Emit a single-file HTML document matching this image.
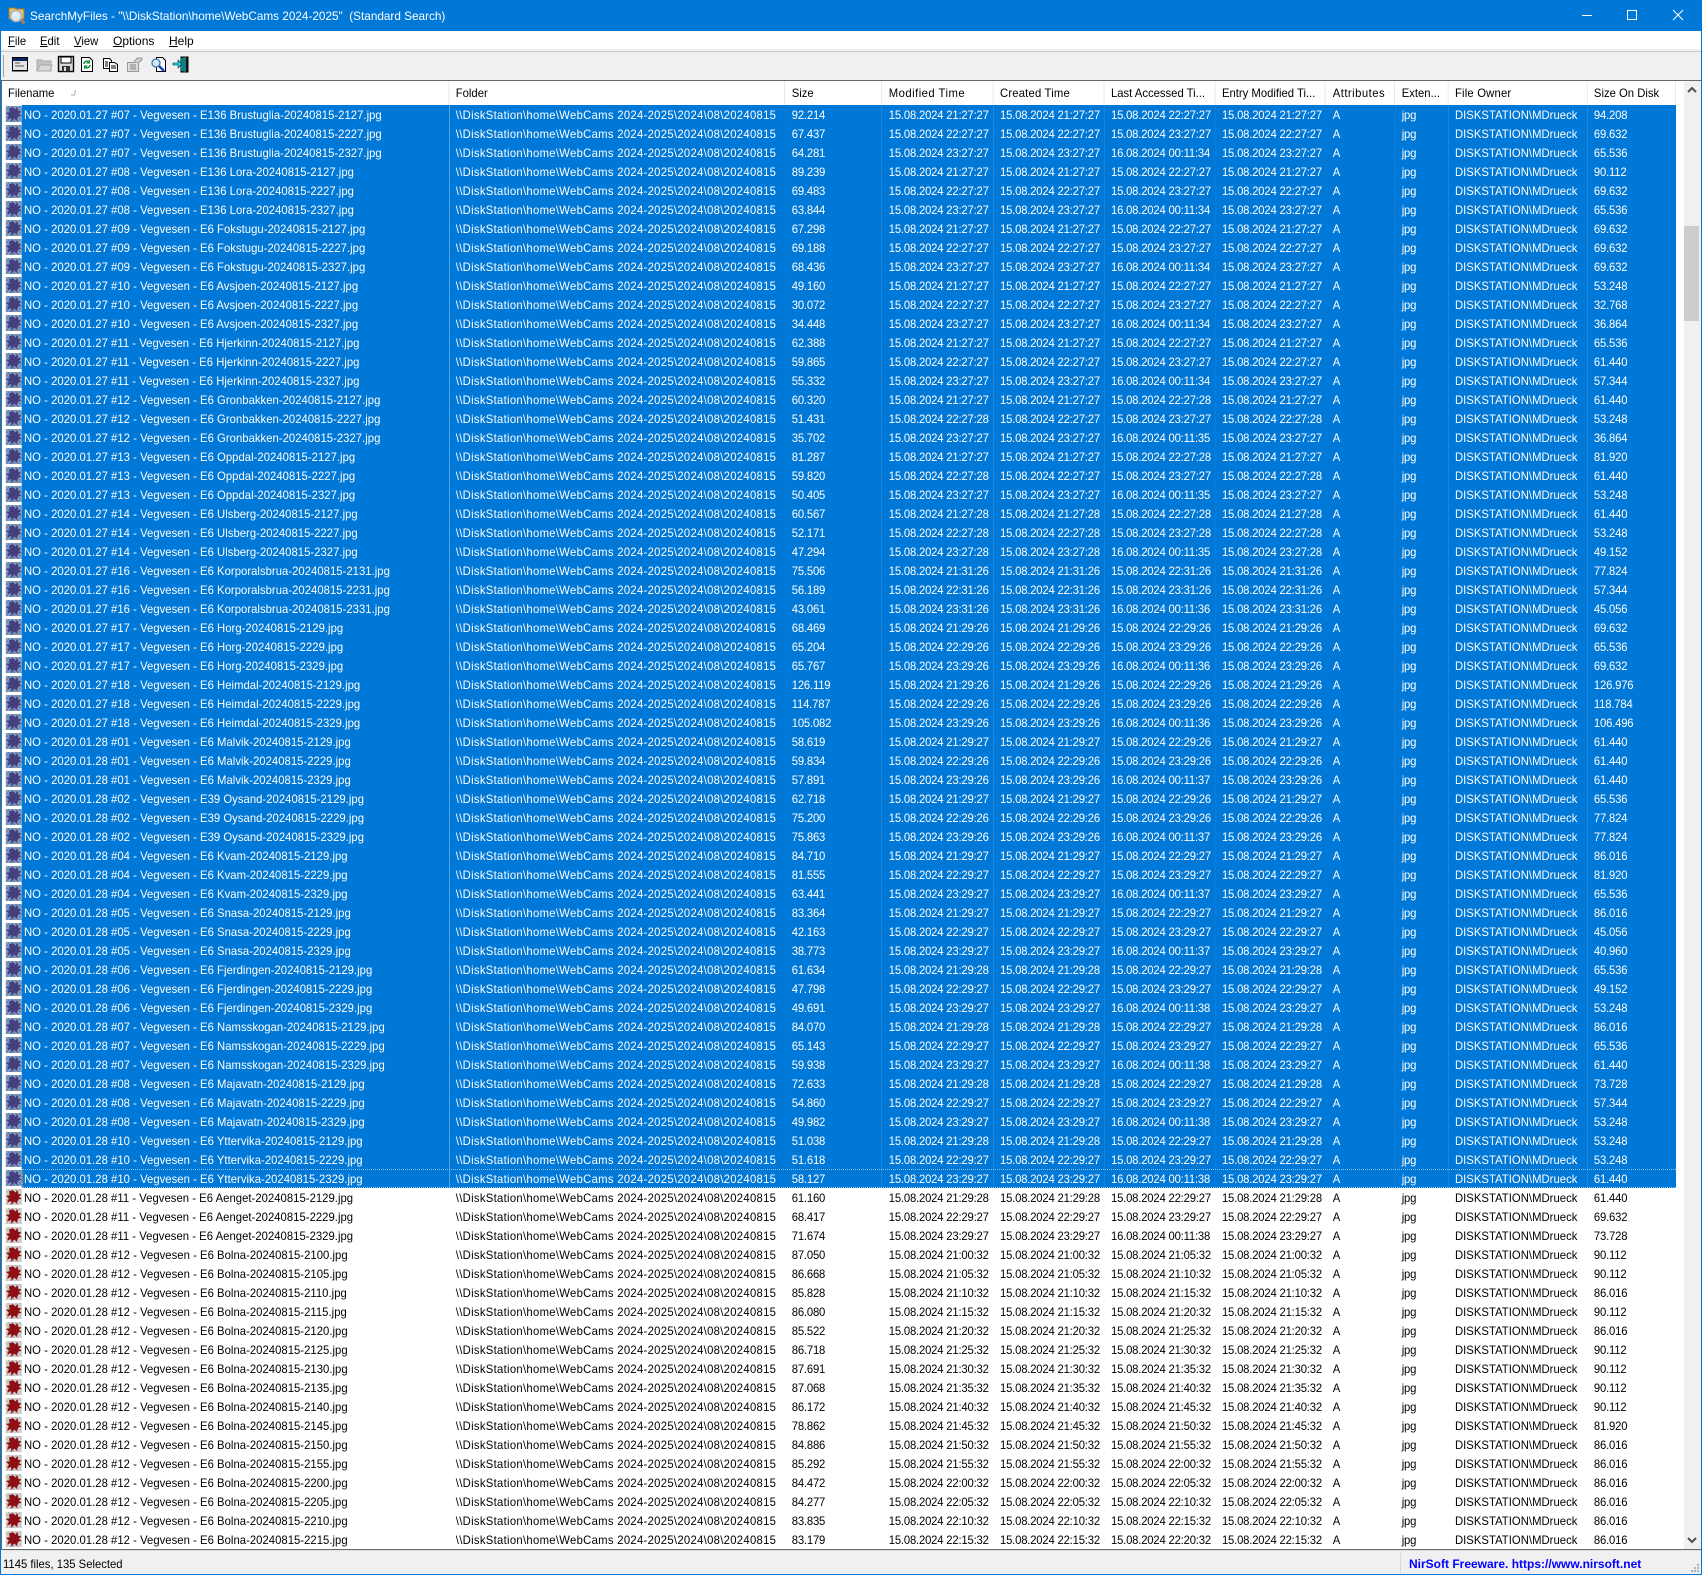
<!DOCTYPE html>
<html lang="en"><head><meta charset="utf-8"><title>SearchMyFiles</title>
<style>
html,body{margin:0;padding:0;width:1702px;height:1575px;overflow:hidden;background:#f0f0f0}
body{position:relative;font:12px "Liberation Sans",sans-serif;color:#000}
.a{position:absolute}
.t{position:absolute;white-space:pre;transform:scaleX(.94);transform-origin:0 50%;line-height:16px}
#list{position:absolute;left:2px;top:81px;width:1780.85px;height:1468px;overflow:hidden;transform:scaleX(.94);transform-origin:0 0;background:#fff}
table{border-collapse:separate;border-spacing:0;table-layout:fixed;width:1780.85px}
th{height:24px;padding:0 0 0 6.38px;text-align:left;font-weight:400;background:#fff;border-right:1px solid #e5e5e5;box-sizing:border-box;overflow:hidden;white-space:nowrap}
th:nth-child(2),th:nth-child(3),th:nth-child(4),th:nth-child(8),th:nth-child(9){padding-left:7.2px}
th:nth-child(4),th:nth-child(8){letter-spacing:.5px}
th:nth-child(5),th:nth-child(10){letter-spacing:.2px}
td{height:19px;padding:2px 0 0 6.38px;overflow:hidden;white-space:nowrap;line-height:17px;box-sizing:border-box}
td:nth-child(n+3){letter-spacing:-.2px}
td:nth-child(3),td:nth-child(4),td:nth-child(8),td:nth-child(9){padding-left:7.2px}
td:nth-child(10){letter-spacing:.04px}
td:nth-child(1){padding-left:23.4px;position:relative;letter-spacing:.035px}
td:nth-child(2){letter-spacing:.32px;padding-left:7.2px}
td:nth-child(1)::before{content:"";position:absolute;left:4.26px;top:1px;width:17px;height:16px;background:repeating-conic-gradient(#bdbdbd 0 25%,#d8d8d8 0 50%) 0 0/4px 4px}
td:nth-child(1)::after{content:"";position:absolute;left:4.26px;top:1px;width:17px;height:16px;background:#8f0f12;clip-path:polygon(45% 8%,58% 22%,72% 6%,76% 30%,96% 34%,80% 50%,100% 62%,76% 66%,68% 94%,52% 78%,34% 100%,32% 76%,6% 84%,18% 58%,0 44%,24% 38%,18% 14%)}
tr.s td{background:#0078d7;color:#fff}
tr.s td:nth-child(1){background:linear-gradient(#0078d7,#0078d7) right top/calc(100% - 21.28px) 100% no-repeat #fff}
tr.s td:nth-child(1)::before{background:repeating-conic-gradient(#6585b2 0 25%,#8aa3c4 0 50%) 0 0/4px 4px}
tr.s td:nth-child(1)::after{background:#453f7d}
u{text-decoration:underline;text-underline-offset:1px}
</style></head><body>
<div class="a" style="left:0;top:0;width:1702px;height:31px;background:#0078d7"></div>
<div class="a" style="left:0;top:31px;width:1702px;height:18px;background:#fff"></div>
<div class="a" style="left:0;top:49px;width:1702px;height:3px;background:#f0f0f0"></div>
<div class="a" style="left:0;top:51px;width:1702px;height:1px;background:#c8c8c8"></div>
<div class="a" style="left:0;top:80px;width:1702px;height:1px;background:#696969"></div>
<div class="a" style="left:0;top:0;width:1px;height:1575px;background:#0078d7"></div>
<div class="a" style="left:1701px;top:0;width:1px;height:1575px;background:#0078d7"></div>
<div class="a" style="left:0;top:1574px;width:1702px;height:1px;background:#0078d7"></div>
<div class="a" style="left:1px;top:80px;width:1px;height:1470px;background:#696969"></div>

<svg class="a" style="left:8px;top:6px" width="18" height="19" viewBox="0 0 18 19"><path d="M1 3V2h6l1 1h8v10H1z" fill="#f0c25a" stroke="#9a7a3a"/><path d="M12 13l4.500 4.500" stroke="#b07a68" stroke-width="3"/><circle cx="8" cy="10" r="5.500" fill="#dcedf8" stroke="#a9b4bd" stroke-width="1.600"/><path d="M5.500 10a3 3 0 0 1 2.500-3" stroke="#fff" fill="none"/></svg>
<div class="t" style="left:30px;top:8px;color:#fff;transform:scaleX(.98)">SearchMyFiles - "\\DiskStation\home\WebCams 2024-2025"  (Standard Search)</div>

<svg class="a" style="left:1580px;top:8px" width="110" height="16" viewBox="0 0 110 16" fill="none" stroke="#fff"><path d="M2 7.500h10"/><rect x="47.500" y="2.500" width="9" height="9"/><path d="M93 2l10 10M103 2L93 12"/></svg>

<div class="t" style="left:8px;top:33px"><u>F</u>ile</div>
<div class="t" style="left:40px;top:33px"><u>E</u>dit</div>
<div class="t" style="left:74px;top:33px"><u>V</u>iew</div>
<div class="t" style="left:113px;top:33px;transform:none"><u>O</u>ptions</div>
<div class="t" style="left:169px;top:33px;transform:none"><u>H</u>elp</div>

<div class="a" style="left:3px;top:55px;width:1px;height:22px;background:#a0a0a0"></div>
<svg class="a" style="left:10px;top:53px" width="184" height="22" viewBox="0 0 184 22" fill="none">
<g><rect x="2.500" y="4.500" width="15" height="13" fill="#e4e4e4" stroke="#000"/><rect x="3" y="5" width="14" height="3" fill="#0a246a"/><path d="M5 10h5M5 13h9" stroke="#555"/><path d="M2 18h16" stroke="#000"/></g>
<g><path d="M27 7h5l1 1h8v10H27z" fill="#c4c4c4" stroke="#a8a8a8"/><path d="M27 18l3-6h12l-2 6z" fill="#d8d8d8" stroke="#a8a8a8"/></g>
<g><rect x="48.500" y="3.500" width="15" height="15" fill="#d8d8d8" stroke="#000" stroke-width="1.400"/><rect x="51" y="4" width="10" height="6" fill="#fff" stroke="#000"/><rect x="52" y="13" width="8" height="5.500" fill="#333"/><rect x="54" y="14" width="2" height="4" fill="#ddd"/></g>
<g><path d="M71.500 4.500h8l3 3v11h-11z" fill="#fff" stroke="#000"/><path d="M74 11a3 3 0 0 1 5-2" stroke="#109040" stroke-width="1.500"/><path d="M80 6.500v4h-4z" fill="#109040"/><path d="M80 12a3 3 0 0 1-5 2" stroke="#109040" stroke-width="1.500"/><path d="M74 16.500v-4h4z" fill="#109040"/></g>
<g><path d="M93.500 5.500h6l2 2v8h-8z" fill="#fff" stroke="#000"/><path d="M99.500 9.500h5l3 2v7h-8z" fill="#fff" stroke="#000"/><path d="M95 9h3M95 11h3M95 13h3M101 13h5M101 15h5" stroke="#000"/></g>
<g><path d="M117.500 9.500h11v9h-11z" fill="#ddd" stroke="#999"/><path d="M120 12h6M120 14h6M120 16h6" stroke="#888"/><path d="M124 9l3-4h5v2l-4 3" fill="#ccc" stroke="#999"/></g>
<g><path d="M146.500 4.500h6l3 3v11h-9z" fill="#fff" stroke="#000"/><circle cx="146" cy="10" r="4" fill="#cde8f8" stroke="#4a78a0" stroke-width="1.300"/><path d="M149 13l5 5" stroke="#1a3fc0" stroke-width="2.500"/></g>
<g><path d="M171 4h7v15h-7z" fill="#101818" stroke="#000"/><path d="M171 5l5-1v15l-5-1z" fill="#0e8080"/><path d="M163 10h5V7l4 4-4 4v-3h-5z" fill="#10d8e8" stroke="#002a30" stroke-width=".6"/></g>
</svg>

<div id="list"><table><colgroup><col style="width:475.53px"><col style="width:357.45px"><col style="width:103.19px"><col style="width:119.15px"><col style="width:118.09px"><col style="width:118.09px"><col style="width:117.02px"><col style="width:73.4px"><col style="width:57.45px"><col style="width:147.87px"><col style="width:93.61px"></colgroup>
<thead><tr><th>Filename<th>Folder<th>Size<th>Modified Time<th>Created Time<th>Last Accessed Ti...<th>Entry Modified Ti...<th>Attributes<th>Exten...<th>File Owner<th>Size On Disk</tr></thead>
<tbody>
<tr class=s><td>NO - 2020.01.27 #07 - Vegvesen - E136 Brustuglia-20240815-2127.jpg<td>\\DiskStation\home\WebCams 2024-2025\2024\08\20240815<td>92.214<td>15.08.2024 21:27:27<td>15.08.2024 21:27:27<td>15.08.2024 22:27:27<td>15.08.2024 21:27:27<td>A<td>jpg<td>DISKSTATION\MDrueck<td>94.208
<tr class=s><td>NO - 2020.01.27 #07 - Vegvesen - E136 Brustuglia-20240815-2227.jpg<td>\\DiskStation\home\WebCams 2024-2025\2024\08\20240815<td>67.437<td>15.08.2024 22:27:27<td>15.08.2024 22:27:27<td>15.08.2024 23:27:27<td>15.08.2024 22:27:27<td>A<td>jpg<td>DISKSTATION\MDrueck<td>69.632
<tr class=s><td>NO - 2020.01.27 #07 - Vegvesen - E136 Brustuglia-20240815-2327.jpg<td>\\DiskStation\home\WebCams 2024-2025\2024\08\20240815<td>64.281<td>15.08.2024 23:27:27<td>15.08.2024 23:27:27<td>16.08.2024 00:11:34<td>15.08.2024 23:27:27<td>A<td>jpg<td>DISKSTATION\MDrueck<td>65.536
<tr class=s><td>NO - 2020.01.27 #08 - Vegvesen - E136 Lora-20240815-2127.jpg<td>\\DiskStation\home\WebCams 2024-2025\2024\08\20240815<td>89.239<td>15.08.2024 21:27:27<td>15.08.2024 21:27:27<td>15.08.2024 22:27:27<td>15.08.2024 21:27:27<td>A<td>jpg<td>DISKSTATION\MDrueck<td>90.112
<tr class=s><td>NO - 2020.01.27 #08 - Vegvesen - E136 Lora-20240815-2227.jpg<td>\\DiskStation\home\WebCams 2024-2025\2024\08\20240815<td>69.483<td>15.08.2024 22:27:27<td>15.08.2024 22:27:27<td>15.08.2024 23:27:27<td>15.08.2024 22:27:27<td>A<td>jpg<td>DISKSTATION\MDrueck<td>69.632
<tr class=s><td>NO - 2020.01.27 #08 - Vegvesen - E136 Lora-20240815-2327.jpg<td>\\DiskStation\home\WebCams 2024-2025\2024\08\20240815<td>63.844<td>15.08.2024 23:27:27<td>15.08.2024 23:27:27<td>16.08.2024 00:11:34<td>15.08.2024 23:27:27<td>A<td>jpg<td>DISKSTATION\MDrueck<td>65.536
<tr class=s><td>NO - 2020.01.27 #09 - Vegvesen - E6 Fokstugu-20240815-2127.jpg<td>\\DiskStation\home\WebCams 2024-2025\2024\08\20240815<td>67.298<td>15.08.2024 21:27:27<td>15.08.2024 21:27:27<td>15.08.2024 22:27:27<td>15.08.2024 21:27:27<td>A<td>jpg<td>DISKSTATION\MDrueck<td>69.632
<tr class=s><td>NO - 2020.01.27 #09 - Vegvesen - E6 Fokstugu-20240815-2227.jpg<td>\\DiskStation\home\WebCams 2024-2025\2024\08\20240815<td>69.188<td>15.08.2024 22:27:27<td>15.08.2024 22:27:27<td>15.08.2024 23:27:27<td>15.08.2024 22:27:27<td>A<td>jpg<td>DISKSTATION\MDrueck<td>69.632
<tr class=s><td>NO - 2020.01.27 #09 - Vegvesen - E6 Fokstugu-20240815-2327.jpg<td>\\DiskStation\home\WebCams 2024-2025\2024\08\20240815<td>68.436<td>15.08.2024 23:27:27<td>15.08.2024 23:27:27<td>16.08.2024 00:11:34<td>15.08.2024 23:27:27<td>A<td>jpg<td>DISKSTATION\MDrueck<td>69.632
<tr class=s><td>NO - 2020.01.27 #10 - Vegvesen - E6 Avsjoen-20240815-2127.jpg<td>\\DiskStation\home\WebCams 2024-2025\2024\08\20240815<td>49.160<td>15.08.2024 21:27:27<td>15.08.2024 21:27:27<td>15.08.2024 22:27:27<td>15.08.2024 21:27:27<td>A<td>jpg<td>DISKSTATION\MDrueck<td>53.248
<tr class=s><td>NO - 2020.01.27 #10 - Vegvesen - E6 Avsjoen-20240815-2227.jpg<td>\\DiskStation\home\WebCams 2024-2025\2024\08\20240815<td>30.072<td>15.08.2024 22:27:27<td>15.08.2024 22:27:27<td>15.08.2024 23:27:27<td>15.08.2024 22:27:27<td>A<td>jpg<td>DISKSTATION\MDrueck<td>32.768
<tr class=s><td>NO - 2020.01.27 #10 - Vegvesen - E6 Avsjoen-20240815-2327.jpg<td>\\DiskStation\home\WebCams 2024-2025\2024\08\20240815<td>34.448<td>15.08.2024 23:27:27<td>15.08.2024 23:27:27<td>16.08.2024 00:11:34<td>15.08.2024 23:27:27<td>A<td>jpg<td>DISKSTATION\MDrueck<td>36.864
<tr class=s><td>NO - 2020.01.27 #11 - Vegvesen - E6 Hjerkinn-20240815-2127.jpg<td>\\DiskStation\home\WebCams 2024-2025\2024\08\20240815<td>62.388<td>15.08.2024 21:27:27<td>15.08.2024 21:27:27<td>15.08.2024 22:27:27<td>15.08.2024 21:27:27<td>A<td>jpg<td>DISKSTATION\MDrueck<td>65.536
<tr class=s><td>NO - 2020.01.27 #11 - Vegvesen - E6 Hjerkinn-20240815-2227.jpg<td>\\DiskStation\home\WebCams 2024-2025\2024\08\20240815<td>59.865<td>15.08.2024 22:27:27<td>15.08.2024 22:27:27<td>15.08.2024 23:27:27<td>15.08.2024 22:27:27<td>A<td>jpg<td>DISKSTATION\MDrueck<td>61.440
<tr class=s><td>NO - 2020.01.27 #11 - Vegvesen - E6 Hjerkinn-20240815-2327.jpg<td>\\DiskStation\home\WebCams 2024-2025\2024\08\20240815<td>55.332<td>15.08.2024 23:27:27<td>15.08.2024 23:27:27<td>16.08.2024 00:11:34<td>15.08.2024 23:27:27<td>A<td>jpg<td>DISKSTATION\MDrueck<td>57.344
<tr class=s><td>NO - 2020.01.27 #12 - Vegvesen - E6 Gronbakken-20240815-2127.jpg<td>\\DiskStation\home\WebCams 2024-2025\2024\08\20240815<td>60.320<td>15.08.2024 21:27:27<td>15.08.2024 21:27:27<td>15.08.2024 22:27:28<td>15.08.2024 21:27:27<td>A<td>jpg<td>DISKSTATION\MDrueck<td>61.440
<tr class=s><td>NO - 2020.01.27 #12 - Vegvesen - E6 Gronbakken-20240815-2227.jpg<td>\\DiskStation\home\WebCams 2024-2025\2024\08\20240815<td>51.431<td>15.08.2024 22:27:28<td>15.08.2024 22:27:27<td>15.08.2024 23:27:27<td>15.08.2024 22:27:28<td>A<td>jpg<td>DISKSTATION\MDrueck<td>53.248
<tr class=s><td>NO - 2020.01.27 #12 - Vegvesen - E6 Gronbakken-20240815-2327.jpg<td>\\DiskStation\home\WebCams 2024-2025\2024\08\20240815<td>35.702<td>15.08.2024 23:27:27<td>15.08.2024 23:27:27<td>16.08.2024 00:11:35<td>15.08.2024 23:27:27<td>A<td>jpg<td>DISKSTATION\MDrueck<td>36.864
<tr class=s><td>NO - 2020.01.27 #13 - Vegvesen - E6 Oppdal-20240815-2127.jpg<td>\\DiskStation\home\WebCams 2024-2025\2024\08\20240815<td>81.287<td>15.08.2024 21:27:27<td>15.08.2024 21:27:27<td>15.08.2024 22:27:28<td>15.08.2024 21:27:27<td>A<td>jpg<td>DISKSTATION\MDrueck<td>81.920
<tr class=s><td>NO - 2020.01.27 #13 - Vegvesen - E6 Oppdal-20240815-2227.jpg<td>\\DiskStation\home\WebCams 2024-2025\2024\08\20240815<td>59.820<td>15.08.2024 22:27:28<td>15.08.2024 22:27:27<td>15.08.2024 23:27:27<td>15.08.2024 22:27:28<td>A<td>jpg<td>DISKSTATION\MDrueck<td>61.440
<tr class=s><td>NO - 2020.01.27 #13 - Vegvesen - E6 Oppdal-20240815-2327.jpg<td>\\DiskStation\home\WebCams 2024-2025\2024\08\20240815<td>50.405<td>15.08.2024 23:27:27<td>15.08.2024 23:27:27<td>16.08.2024 00:11:35<td>15.08.2024 23:27:27<td>A<td>jpg<td>DISKSTATION\MDrueck<td>53.248
<tr class=s><td>NO - 2020.01.27 #14 - Vegvesen - E6 Ulsberg-20240815-2127.jpg<td>\\DiskStation\home\WebCams 2024-2025\2024\08\20240815<td>60.567<td>15.08.2024 21:27:28<td>15.08.2024 21:27:28<td>15.08.2024 22:27:28<td>15.08.2024 21:27:28<td>A<td>jpg<td>DISKSTATION\MDrueck<td>61.440
<tr class=s><td>NO - 2020.01.27 #14 - Vegvesen - E6 Ulsberg-20240815-2227.jpg<td>\\DiskStation\home\WebCams 2024-2025\2024\08\20240815<td>52.171<td>15.08.2024 22:27:28<td>15.08.2024 22:27:28<td>15.08.2024 23:27:28<td>15.08.2024 22:27:28<td>A<td>jpg<td>DISKSTATION\MDrueck<td>53.248
<tr class=s><td>NO - 2020.01.27 #14 - Vegvesen - E6 Ulsberg-20240815-2327.jpg<td>\\DiskStation\home\WebCams 2024-2025\2024\08\20240815<td>47.294<td>15.08.2024 23:27:28<td>15.08.2024 23:27:28<td>16.08.2024 00:11:35<td>15.08.2024 23:27:28<td>A<td>jpg<td>DISKSTATION\MDrueck<td>49.152
<tr class=s><td>NO - 2020.01.27 #16 - Vegvesen - E6 Korporalsbrua-20240815-2131.jpg<td>\\DiskStation\home\WebCams 2024-2025\2024\08\20240815<td>75.506<td>15.08.2024 21:31:26<td>15.08.2024 21:31:26<td>15.08.2024 22:31:26<td>15.08.2024 21:31:26<td>A<td>jpg<td>DISKSTATION\MDrueck<td>77.824
<tr class=s><td>NO - 2020.01.27 #16 - Vegvesen - E6 Korporalsbrua-20240815-2231.jpg<td>\\DiskStation\home\WebCams 2024-2025\2024\08\20240815<td>56.189<td>15.08.2024 22:31:26<td>15.08.2024 22:31:26<td>15.08.2024 23:31:26<td>15.08.2024 22:31:26<td>A<td>jpg<td>DISKSTATION\MDrueck<td>57.344
<tr class=s><td>NO - 2020.01.27 #16 - Vegvesen - E6 Korporalsbrua-20240815-2331.jpg<td>\\DiskStation\home\WebCams 2024-2025\2024\08\20240815<td>43.061<td>15.08.2024 23:31:26<td>15.08.2024 23:31:26<td>16.08.2024 00:11:36<td>15.08.2024 23:31:26<td>A<td>jpg<td>DISKSTATION\MDrueck<td>45.056
<tr class=s><td>NO - 2020.01.27 #17 - Vegvesen - E6 Horg-20240815-2129.jpg<td>\\DiskStation\home\WebCams 2024-2025\2024\08\20240815<td>68.469<td>15.08.2024 21:29:26<td>15.08.2024 21:29:26<td>15.08.2024 22:29:26<td>15.08.2024 21:29:26<td>A<td>jpg<td>DISKSTATION\MDrueck<td>69.632
<tr class=s><td>NO - 2020.01.27 #17 - Vegvesen - E6 Horg-20240815-2229.jpg<td>\\DiskStation\home\WebCams 2024-2025\2024\08\20240815<td>65.204<td>15.08.2024 22:29:26<td>15.08.2024 22:29:26<td>15.08.2024 23:29:26<td>15.08.2024 22:29:26<td>A<td>jpg<td>DISKSTATION\MDrueck<td>65.536
<tr class=s><td>NO - 2020.01.27 #17 - Vegvesen - E6 Horg-20240815-2329.jpg<td>\\DiskStation\home\WebCams 2024-2025\2024\08\20240815<td>65.767<td>15.08.2024 23:29:26<td>15.08.2024 23:29:26<td>16.08.2024 00:11:36<td>15.08.2024 23:29:26<td>A<td>jpg<td>DISKSTATION\MDrueck<td>69.632
<tr class=s><td>NO - 2020.01.27 #18 - Vegvesen - E6 Heimdal-20240815-2129.jpg<td>\\DiskStation\home\WebCams 2024-2025\2024\08\20240815<td>126.119<td>15.08.2024 21:29:26<td>15.08.2024 21:29:26<td>15.08.2024 22:29:26<td>15.08.2024 21:29:26<td>A<td>jpg<td>DISKSTATION\MDrueck<td>126.976
<tr class=s><td>NO - 2020.01.27 #18 - Vegvesen - E6 Heimdal-20240815-2229.jpg<td>\\DiskStation\home\WebCams 2024-2025\2024\08\20240815<td>114.787<td>15.08.2024 22:29:26<td>15.08.2024 22:29:26<td>15.08.2024 23:29:26<td>15.08.2024 22:29:26<td>A<td>jpg<td>DISKSTATION\MDrueck<td>118.784
<tr class=s><td>NO - 2020.01.27 #18 - Vegvesen - E6 Heimdal-20240815-2329.jpg<td>\\DiskStation\home\WebCams 2024-2025\2024\08\20240815<td>105.082<td>15.08.2024 23:29:26<td>15.08.2024 23:29:26<td>16.08.2024 00:11:36<td>15.08.2024 23:29:26<td>A<td>jpg<td>DISKSTATION\MDrueck<td>106.496
<tr class=s><td>NO - 2020.01.28 #01 - Vegvesen - E6 Malvik-20240815-2129.jpg<td>\\DiskStation\home\WebCams 2024-2025\2024\08\20240815<td>58.619<td>15.08.2024 21:29:27<td>15.08.2024 21:29:27<td>15.08.2024 22:29:26<td>15.08.2024 21:29:27<td>A<td>jpg<td>DISKSTATION\MDrueck<td>61.440
<tr class=s><td>NO - 2020.01.28 #01 - Vegvesen - E6 Malvik-20240815-2229.jpg<td>\\DiskStation\home\WebCams 2024-2025\2024\08\20240815<td>59.834<td>15.08.2024 22:29:26<td>15.08.2024 22:29:26<td>15.08.2024 23:29:26<td>15.08.2024 22:29:26<td>A<td>jpg<td>DISKSTATION\MDrueck<td>61.440
<tr class=s><td>NO - 2020.01.28 #01 - Vegvesen - E6 Malvik-20240815-2329.jpg<td>\\DiskStation\home\WebCams 2024-2025\2024\08\20240815<td>57.891<td>15.08.2024 23:29:26<td>15.08.2024 23:29:26<td>16.08.2024 00:11:37<td>15.08.2024 23:29:26<td>A<td>jpg<td>DISKSTATION\MDrueck<td>61.440
<tr class=s><td>NO - 2020.01.28 #02 - Vegvesen - E39 Oysand-20240815-2129.jpg<td>\\DiskStation\home\WebCams 2024-2025\2024\08\20240815<td>62.718<td>15.08.2024 21:29:27<td>15.08.2024 21:29:27<td>15.08.2024 22:29:26<td>15.08.2024 21:29:27<td>A<td>jpg<td>DISKSTATION\MDrueck<td>65.536
<tr class=s><td>NO - 2020.01.28 #02 - Vegvesen - E39 Oysand-20240815-2229.jpg<td>\\DiskStation\home\WebCams 2024-2025\2024\08\20240815<td>75.200<td>15.08.2024 22:29:26<td>15.08.2024 22:29:26<td>15.08.2024 23:29:26<td>15.08.2024 22:29:26<td>A<td>jpg<td>DISKSTATION\MDrueck<td>77.824
<tr class=s><td>NO - 2020.01.28 #02 - Vegvesen - E39 Oysand-20240815-2329.jpg<td>\\DiskStation\home\WebCams 2024-2025\2024\08\20240815<td>75.863<td>15.08.2024 23:29:26<td>15.08.2024 23:29:26<td>16.08.2024 00:11:37<td>15.08.2024 23:29:26<td>A<td>jpg<td>DISKSTATION\MDrueck<td>77.824
<tr class=s><td>NO - 2020.01.28 #04 - Vegvesen - E6 Kvam-20240815-2129.jpg<td>\\DiskStation\home\WebCams 2024-2025\2024\08\20240815<td>84.710<td>15.08.2024 21:29:27<td>15.08.2024 21:29:27<td>15.08.2024 22:29:27<td>15.08.2024 21:29:27<td>A<td>jpg<td>DISKSTATION\MDrueck<td>86.016
<tr class=s><td>NO - 2020.01.28 #04 - Vegvesen - E6 Kvam-20240815-2229.jpg<td>\\DiskStation\home\WebCams 2024-2025\2024\08\20240815<td>81.555<td>15.08.2024 22:29:27<td>15.08.2024 22:29:27<td>15.08.2024 23:29:27<td>15.08.2024 22:29:27<td>A<td>jpg<td>DISKSTATION\MDrueck<td>81.920
<tr class=s><td>NO - 2020.01.28 #04 - Vegvesen - E6 Kvam-20240815-2329.jpg<td>\\DiskStation\home\WebCams 2024-2025\2024\08\20240815<td>63.441<td>15.08.2024 23:29:27<td>15.08.2024 23:29:27<td>16.08.2024 00:11:37<td>15.08.2024 23:29:27<td>A<td>jpg<td>DISKSTATION\MDrueck<td>65.536
<tr class=s><td>NO - 2020.01.28 #05 - Vegvesen - E6 Snasa-20240815-2129.jpg<td>\\DiskStation\home\WebCams 2024-2025\2024\08\20240815<td>83.364<td>15.08.2024 21:29:27<td>15.08.2024 21:29:27<td>15.08.2024 22:29:27<td>15.08.2024 21:29:27<td>A<td>jpg<td>DISKSTATION\MDrueck<td>86.016
<tr class=s><td>NO - 2020.01.28 #05 - Vegvesen - E6 Snasa-20240815-2229.jpg<td>\\DiskStation\home\WebCams 2024-2025\2024\08\20240815<td>42.163<td>15.08.2024 22:29:27<td>15.08.2024 22:29:27<td>15.08.2024 23:29:27<td>15.08.2024 22:29:27<td>A<td>jpg<td>DISKSTATION\MDrueck<td>45.056
<tr class=s><td>NO - 2020.01.28 #05 - Vegvesen - E6 Snasa-20240815-2329.jpg<td>\\DiskStation\home\WebCams 2024-2025\2024\08\20240815<td>38.773<td>15.08.2024 23:29:27<td>15.08.2024 23:29:27<td>16.08.2024 00:11:37<td>15.08.2024 23:29:27<td>A<td>jpg<td>DISKSTATION\MDrueck<td>40.960
<tr class=s><td>NO - 2020.01.28 #06 - Vegvesen - E6 Fjerdingen-20240815-2129.jpg<td>\\DiskStation\home\WebCams 2024-2025\2024\08\20240815<td>61.634<td>15.08.2024 21:29:28<td>15.08.2024 21:29:28<td>15.08.2024 22:29:27<td>15.08.2024 21:29:28<td>A<td>jpg<td>DISKSTATION\MDrueck<td>65.536
<tr class=s><td>NO - 2020.01.28 #06 - Vegvesen - E6 Fjerdingen-20240815-2229.jpg<td>\\DiskStation\home\WebCams 2024-2025\2024\08\20240815<td>47.798<td>15.08.2024 22:29:27<td>15.08.2024 22:29:27<td>15.08.2024 23:29:27<td>15.08.2024 22:29:27<td>A<td>jpg<td>DISKSTATION\MDrueck<td>49.152
<tr class=s><td>NO - 2020.01.28 #06 - Vegvesen - E6 Fjerdingen-20240815-2329.jpg<td>\\DiskStation\home\WebCams 2024-2025\2024\08\20240815<td>49.691<td>15.08.2024 23:29:27<td>15.08.2024 23:29:27<td>16.08.2024 00:11:38<td>15.08.2024 23:29:27<td>A<td>jpg<td>DISKSTATION\MDrueck<td>53.248
<tr class=s><td>NO - 2020.01.28 #07 - Vegvesen - E6 Namsskogan-20240815-2129.jpg<td>\\DiskStation\home\WebCams 2024-2025\2024\08\20240815<td>84.070<td>15.08.2024 21:29:28<td>15.08.2024 21:29:28<td>15.08.2024 22:29:27<td>15.08.2024 21:29:28<td>A<td>jpg<td>DISKSTATION\MDrueck<td>86.016
<tr class=s><td>NO - 2020.01.28 #07 - Vegvesen - E6 Namsskogan-20240815-2229.jpg<td>\\DiskStation\home\WebCams 2024-2025\2024\08\20240815<td>65.143<td>15.08.2024 22:29:27<td>15.08.2024 22:29:27<td>15.08.2024 23:29:27<td>15.08.2024 22:29:27<td>A<td>jpg<td>DISKSTATION\MDrueck<td>65.536
<tr class=s><td>NO - 2020.01.28 #07 - Vegvesen - E6 Namsskogan-20240815-2329.jpg<td>\\DiskStation\home\WebCams 2024-2025\2024\08\20240815<td>59.938<td>15.08.2024 23:29:27<td>15.08.2024 23:29:27<td>16.08.2024 00:11:38<td>15.08.2024 23:29:27<td>A<td>jpg<td>DISKSTATION\MDrueck<td>61.440
<tr class=s><td>NO - 2020.01.28 #08 - Vegvesen - E6 Majavatn-20240815-2129.jpg<td>\\DiskStation\home\WebCams 2024-2025\2024\08\20240815<td>72.633<td>15.08.2024 21:29:28<td>15.08.2024 21:29:28<td>15.08.2024 22:29:27<td>15.08.2024 21:29:28<td>A<td>jpg<td>DISKSTATION\MDrueck<td>73.728
<tr class=s><td>NO - 2020.01.28 #08 - Vegvesen - E6 Majavatn-20240815-2229.jpg<td>\\DiskStation\home\WebCams 2024-2025\2024\08\20240815<td>54.860<td>15.08.2024 22:29:27<td>15.08.2024 22:29:27<td>15.08.2024 23:29:27<td>15.08.2024 22:29:27<td>A<td>jpg<td>DISKSTATION\MDrueck<td>57.344
<tr class=s><td>NO - 2020.01.28 #08 - Vegvesen - E6 Majavatn-20240815-2329.jpg<td>\\DiskStation\home\WebCams 2024-2025\2024\08\20240815<td>49.982<td>15.08.2024 23:29:27<td>15.08.2024 23:29:27<td>16.08.2024 00:11:38<td>15.08.2024 23:29:27<td>A<td>jpg<td>DISKSTATION\MDrueck<td>53.248
<tr class=s><td>NO - 2020.01.28 #10 - Vegvesen - E6 Yttervika-20240815-2129.jpg<td>\\DiskStation\home\WebCams 2024-2025\2024\08\20240815<td>51.038<td>15.08.2024 21:29:28<td>15.08.2024 21:29:28<td>15.08.2024 22:29:27<td>15.08.2024 21:29:28<td>A<td>jpg<td>DISKSTATION\MDrueck<td>53.248
<tr class=s><td>NO - 2020.01.28 #10 - Vegvesen - E6 Yttervika-20240815-2229.jpg<td>\\DiskStation\home\WebCams 2024-2025\2024\08\20240815<td>51.618<td>15.08.2024 22:29:27<td>15.08.2024 22:29:27<td>15.08.2024 23:29:27<td>15.08.2024 22:29:27<td>A<td>jpg<td>DISKSTATION\MDrueck<td>53.248
<tr class=s><td>NO - 2020.01.28 #10 - Vegvesen - E6 Yttervika-20240815-2329.jpg<td>\\DiskStation\home\WebCams 2024-2025\2024\08\20240815<td>58.127<td>15.08.2024 23:29:27<td>15.08.2024 23:29:27<td>16.08.2024 00:11:38<td>15.08.2024 23:29:27<td>A<td>jpg<td>DISKSTATION\MDrueck<td>61.440
<tr><td>NO - 2020.01.28 #11 - Vegvesen - E6 Aenget-20240815-2129.jpg<td>\\DiskStation\home\WebCams 2024-2025\2024\08\20240815<td>61.160<td>15.08.2024 21:29:28<td>15.08.2024 21:29:28<td>15.08.2024 22:29:27<td>15.08.2024 21:29:28<td>A<td>jpg<td>DISKSTATION\MDrueck<td>61.440
<tr><td>NO - 2020.01.28 #11 - Vegvesen - E6 Aenget-20240815-2229.jpg<td>\\DiskStation\home\WebCams 2024-2025\2024\08\20240815<td>68.417<td>15.08.2024 22:29:27<td>15.08.2024 22:29:27<td>15.08.2024 23:29:27<td>15.08.2024 22:29:27<td>A<td>jpg<td>DISKSTATION\MDrueck<td>69.632
<tr><td>NO - 2020.01.28 #11 - Vegvesen - E6 Aenget-20240815-2329.jpg<td>\\DiskStation\home\WebCams 2024-2025\2024\08\20240815<td>71.674<td>15.08.2024 23:29:27<td>15.08.2024 23:29:27<td>16.08.2024 00:11:38<td>15.08.2024 23:29:27<td>A<td>jpg<td>DISKSTATION\MDrueck<td>73.728
<tr><td>NO - 2020.01.28 #12 - Vegvesen - E6 Bolna-20240815-2100.jpg<td>\\DiskStation\home\WebCams 2024-2025\2024\08\20240815<td>87.050<td>15.08.2024 21:00:32<td>15.08.2024 21:00:32<td>15.08.2024 21:05:32<td>15.08.2024 21:00:32<td>A<td>jpg<td>DISKSTATION\MDrueck<td>90.112
<tr><td>NO - 2020.01.28 #12 - Vegvesen - E6 Bolna-20240815-2105.jpg<td>\\DiskStation\home\WebCams 2024-2025\2024\08\20240815<td>86.668<td>15.08.2024 21:05:32<td>15.08.2024 21:05:32<td>15.08.2024 21:10:32<td>15.08.2024 21:05:32<td>A<td>jpg<td>DISKSTATION\MDrueck<td>90.112
<tr><td>NO - 2020.01.28 #12 - Vegvesen - E6 Bolna-20240815-2110.jpg<td>\\DiskStation\home\WebCams 2024-2025\2024\08\20240815<td>85.828<td>15.08.2024 21:10:32<td>15.08.2024 21:10:32<td>15.08.2024 21:15:32<td>15.08.2024 21:10:32<td>A<td>jpg<td>DISKSTATION\MDrueck<td>86.016
<tr><td>NO - 2020.01.28 #12 - Vegvesen - E6 Bolna-20240815-2115.jpg<td>\\DiskStation\home\WebCams 2024-2025\2024\08\20240815<td>86.080<td>15.08.2024 21:15:32<td>15.08.2024 21:15:32<td>15.08.2024 21:20:32<td>15.08.2024 21:15:32<td>A<td>jpg<td>DISKSTATION\MDrueck<td>90.112
<tr><td>NO - 2020.01.28 #12 - Vegvesen - E6 Bolna-20240815-2120.jpg<td>\\DiskStation\home\WebCams 2024-2025\2024\08\20240815<td>85.522<td>15.08.2024 21:20:32<td>15.08.2024 21:20:32<td>15.08.2024 21:25:32<td>15.08.2024 21:20:32<td>A<td>jpg<td>DISKSTATION\MDrueck<td>86.016
<tr><td>NO - 2020.01.28 #12 - Vegvesen - E6 Bolna-20240815-2125.jpg<td>\\DiskStation\home\WebCams 2024-2025\2024\08\20240815<td>86.718<td>15.08.2024 21:25:32<td>15.08.2024 21:25:32<td>15.08.2024 21:30:32<td>15.08.2024 21:25:32<td>A<td>jpg<td>DISKSTATION\MDrueck<td>90.112
<tr><td>NO - 2020.01.28 #12 - Vegvesen - E6 Bolna-20240815-2130.jpg<td>\\DiskStation\home\WebCams 2024-2025\2024\08\20240815<td>87.691<td>15.08.2024 21:30:32<td>15.08.2024 21:30:32<td>15.08.2024 21:35:32<td>15.08.2024 21:30:32<td>A<td>jpg<td>DISKSTATION\MDrueck<td>90.112
<tr><td>NO - 2020.01.28 #12 - Vegvesen - E6 Bolna-20240815-2135.jpg<td>\\DiskStation\home\WebCams 2024-2025\2024\08\20240815<td>87.068<td>15.08.2024 21:35:32<td>15.08.2024 21:35:32<td>15.08.2024 21:40:32<td>15.08.2024 21:35:32<td>A<td>jpg<td>DISKSTATION\MDrueck<td>90.112
<tr><td>NO - 2020.01.28 #12 - Vegvesen - E6 Bolna-20240815-2140.jpg<td>\\DiskStation\home\WebCams 2024-2025\2024\08\20240815<td>86.172<td>15.08.2024 21:40:32<td>15.08.2024 21:40:32<td>15.08.2024 21:45:32<td>15.08.2024 21:40:32<td>A<td>jpg<td>DISKSTATION\MDrueck<td>90.112
<tr><td>NO - 2020.01.28 #12 - Vegvesen - E6 Bolna-20240815-2145.jpg<td>\\DiskStation\home\WebCams 2024-2025\2024\08\20240815<td>78.862<td>15.08.2024 21:45:32<td>15.08.2024 21:45:32<td>15.08.2024 21:50:32<td>15.08.2024 21:45:32<td>A<td>jpg<td>DISKSTATION\MDrueck<td>81.920
<tr><td>NO - 2020.01.28 #12 - Vegvesen - E6 Bolna-20240815-2150.jpg<td>\\DiskStation\home\WebCams 2024-2025\2024\08\20240815<td>84.886<td>15.08.2024 21:50:32<td>15.08.2024 21:50:32<td>15.08.2024 21:55:32<td>15.08.2024 21:50:32<td>A<td>jpg<td>DISKSTATION\MDrueck<td>86.016
<tr><td>NO - 2020.01.28 #12 - Vegvesen - E6 Bolna-20240815-2155.jpg<td>\\DiskStation\home\WebCams 2024-2025\2024\08\20240815<td>85.292<td>15.08.2024 21:55:32<td>15.08.2024 21:55:32<td>15.08.2024 22:00:32<td>15.08.2024 21:55:32<td>A<td>jpg<td>DISKSTATION\MDrueck<td>86.016
<tr><td>NO - 2020.01.28 #12 - Vegvesen - E6 Bolna-20240815-2200.jpg<td>\\DiskStation\home\WebCams 2024-2025\2024\08\20240815<td>84.472<td>15.08.2024 22:00:32<td>15.08.2024 22:00:32<td>15.08.2024 22:05:32<td>15.08.2024 22:00:32<td>A<td>jpg<td>DISKSTATION\MDrueck<td>86.016
<tr><td>NO - 2020.01.28 #12 - Vegvesen - E6 Bolna-20240815-2205.jpg<td>\\DiskStation\home\WebCams 2024-2025\2024\08\20240815<td>84.277<td>15.08.2024 22:05:32<td>15.08.2024 22:05:32<td>15.08.2024 22:10:32<td>15.08.2024 22:05:32<td>A<td>jpg<td>DISKSTATION\MDrueck<td>86.016
<tr><td>NO - 2020.01.28 #12 - Vegvesen - E6 Bolna-20240815-2210.jpg<td>\\DiskStation\home\WebCams 2024-2025\2024\08\20240815<td>83.835<td>15.08.2024 22:10:32<td>15.08.2024 22:10:32<td>15.08.2024 22:15:32<td>15.08.2024 22:10:32<td>A<td>jpg<td>DISKSTATION\MDrueck<td>86.016
<tr><td>NO - 2020.01.28 #12 - Vegvesen - E6 Bolna-20240815-2215.jpg<td>\\DiskStation\home\WebCams 2024-2025\2024\08\20240815<td>83.179<td>15.08.2024 22:15:32<td>15.08.2024 22:15:32<td>15.08.2024 22:20:32<td>15.08.2024 22:15:32<td>A<td>jpg<td>DISKSTATION\MDrueck<td>86.016
</tbody></table></div>

<svg class="a" style="left:70px;top:89px" width="8" height="8" viewBox="0 0 8 8" fill="none" stroke="#a8a8a8"><path d="M5.500 1l-1 5H1"/></svg>
<div class="a" style="left:22px;top:1169px;width:1654px;height:19px;box-sizing:border-box;border-top:1px dotted #8fc4f0;border-bottom:1px dotted #8fc4f0;border-left:1px dotted #ff9a30"></div>

<div class="a" style="left:1676px;top:81px;width:8px;height:1468px;background:#fff"></div>
<div class="a" style="left:1684px;top:81px;width:17px;height:1468px;background:#f0f0f0"></div>
<div class="a" style="left:1684px;top:226px;width:15px;height:95px;background:#cdcdcd"></div>
<svg class="a" style="left:1686px;top:85px" width="12" height="10" viewBox="0 0 12 10" fill="none" stroke="#505050" stroke-width="2"><path d="M2 7l4-4 4 4"/></svg>
<svg class="a" style="left:1686px;top:1535px" width="12" height="10" viewBox="0 0 12 10" fill="none" stroke="#505050" stroke-width="2"><path d="M2 3l4 4 4-4"/></svg>

<div class="a" style="left:2px;top:1549px;width:1699px;height:1px;background:#696969"></div>
<div class="a" style="left:2px;top:1550px;width:1699px;height:1px;background:#e0e0e0"></div>
<div class="a" style="left:1400px;top:1553px;width:1px;height:20px;background:#d9d9d9"></div>
<div class="t" style="left:3px;top:1556px">1145 files, 135 Selected</div>
<div class="t" style="left:1409px;top:1556px;color:#0000ff;font-weight:700;transform:none">NirSoft Freeware. https://www.nirsoft.net</div>
<svg class="a" style="left:1690px;top:1563px" width="10" height="10" viewBox="0 0 10 10" fill="#b0b0b0"><rect x="7" y="1" width="2" height="2"/><rect x="4" y="4" width="2" height="2"/><rect x="7" y="4" width="2" height="2"/><rect x="1" y="7" width="2" height="2"/><rect x="4" y="7" width="2" height="2"/><rect x="7" y="7" width="2" height="2"/></svg>
</body></html>
